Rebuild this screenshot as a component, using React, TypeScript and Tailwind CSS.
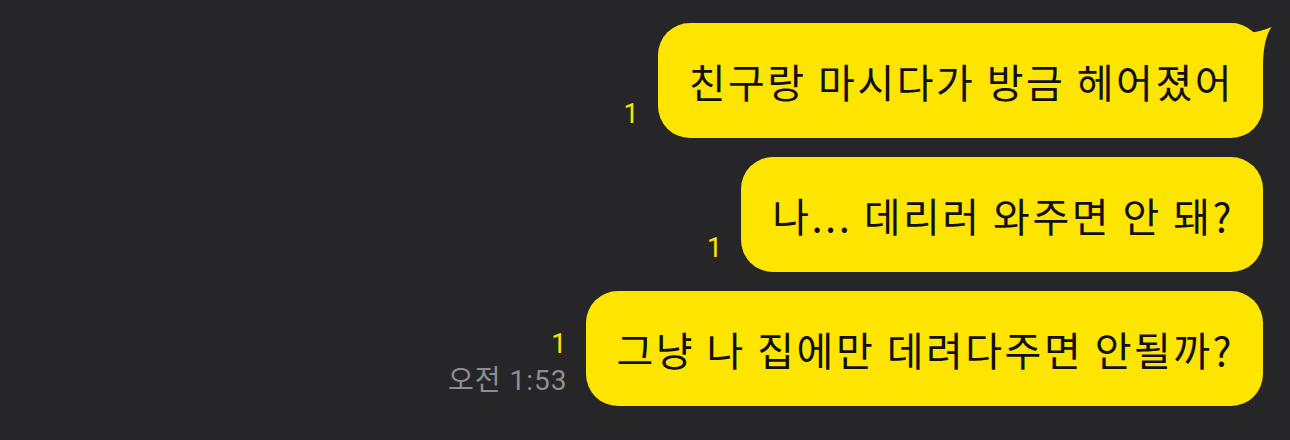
import React from "react";

const font = { fontFamily: '"Noto Sans CJK KR", "Noto Sans", sans-serif' };

function Bubble({ text, tail, read, time }: { text: string; tail?: boolean; read: string; time?: string }) {
  return (
    <div className="flex items-end gap-[19px]">
      <div className={`flex flex-col items-end leading-none ${time ? "pb-[11px]" : "pb-[10px]"}`}>
        <span className="text-[27px] text-[#fee500]" style={{ fontFamily: 'Roboto, "Noto Sans", sans-serif' }}>
          {read}
        </span>
        {time && (
          <span
            className="mr-[-1px] mt-[9px] text-[28px] tracking-[1px] text-[#8e8e90]"
            style={{ fontFamily: 'Roboto, "Noto Sans CJK KR", sans-serif' }}
          >
            {time}
          </span>
        )}
      </div>
      <div className="relative">
        <div className="flex h-[115px] items-center rounded-[32px] bg-[#fee500] pl-[31px] pr-[29px] text-[40px] tracking-[2.5px] text-[#111111]">
          {text}
        </div>
        {tail && (
          <svg className="absolute right-[-9px] top-0" width="42" height="52" viewBox="0 0 42 52">
            <path
              d="M0 0 C10 0 14 4 18 10 Q30 9 41.5 4 C36 12 33 25 33 45 L33 52 L0 52 Z"
              fill="#fee500"
            />
          </svg>
        )}
      </div>
    </div>
  );
}

export default function App() {
  return (
    <div className="h-[440px] w-[1290px] bg-[#262628]" style={font}>
      <div className="flex flex-col items-end gap-[19px] pr-[27px] pt-[23px]">
        <Bubble text="친구랑 마시다가 방금 헤어졌어" tail read="1" />
        <Bubble text="나... 데리러 와주면 안 돼?" read="1" />
        <Bubble text="그냥 나 집에만 데려다주면 안될까?" read="1" time="오전 1:53" />
      </div>
    </div>
  );
}
